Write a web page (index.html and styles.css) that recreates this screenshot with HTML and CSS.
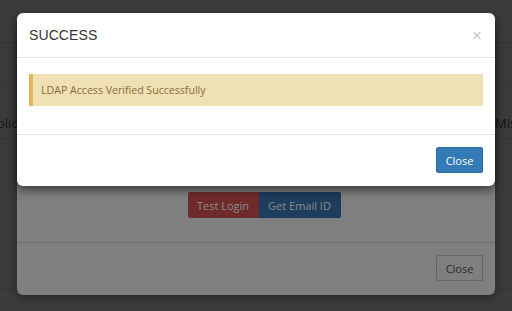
FILE: index.html
```html
<!DOCTYPE html>
<html>
<head>
<meta charset="utf-8">
<link rel="stylesheet" href="styles.css">
</head>
<body>
<div class="page">
  <div class="rule r1"></div>
  <div class="rule r2"></div>
  <div class="rule r3"></div>
  <div class="rule r4"></div>
  <span class="bg-text left">olici</span>
  <span class="bg-text right">Mis</span>
</div>

<div class="modal under">
  <div class="under-body">
    <div class="btn-group">
      <span class="ubtn red">Test Login</span>
      <span class="ubtn blue">Get Email ID</span>
    </div>
  </div>
  <div class="under-footer">
    <span class="ubtn plain">Close</span>
  </div>
</div>

<div class="modal top">
  <div class="modal-header">
    <h4 class="modal-title">SUCCESS</h4>
    <span class="close">&times;</span>
  </div>
  <div class="modal-body">
    <div class="alert">LDAP Access Verified Successfully</div>
  </div>
  <div class="modal-footer">
    <button class="btn-primary">Close</button>
  </div>
</div>
</body>
</html>
```

FILE: styles.css
```css
* { box-sizing: border-box; }
html, body { margin: 0; padding: 0; }
body {
  width: 512px;
  height: 311px;
  background: #3b3b3b;
  font-family: "Open Sans", "Noto Sans", sans-serif;
  overflow: hidden;
  position: relative;
}
.page { position: absolute; inset: 0; }
.rule { position: absolute; left: 0; right: 0; height: 1px; background: #353535; }
.r1 { top: 42px; }
.r2 { top: 81px; }
.r3 { top: 138px; }
.r4 { top: 289px; }
.bg-text {
  position: absolute;
  top: 114px;
  font-size: 13px;
  color: #141414;
}
.bg-text.left { left: -3px; }
.bg-text.right { left: 495px; }

.modal {
  position: absolute;
  left: 17px;
  width: 478px;
  border-radius: 6px;
}
.under {
  top: 30px;
  height: 265px;
  background: #7f7f7f;
  box-shadow: 0 3px 8px rgba(0,0,0,0.35);
  display: flex;
  flex-direction: column;
}
.under-body {
  flex: 1;
  display: flex;
  justify-content: center;
  padding-top: 162px;
  padding-left: 16px;
  border-bottom: 1px solid #6f6f6f;
}
.btn-group { display: flex; height: 26px; }
.ubtn {
  display: flex;
  align-items: center;
  justify-content: center;
  height: 26px;
  font-size: 11px;
  color: #8c8c8c;
}
.red { width: 71px; background: #6e2b2a; border-radius: 2px 0 0 2px; }
.blue { width: 82px; background: #1c3d5c; border-radius: 0 2px 2px 0; }
.under-footer {
  height: 52px;
  display: flex;
  justify-content: flex-end;
  align-items: flex-start;
  padding: 12px 12px 0 0;
}
.plain {
  width: 47px;
  border: 1px solid #666;
  border-radius: 2px;
  color: #2a2a2a;
}

.top {
  top: 13px;
  height: 173px;
  background: #fff;
  box-shadow: 0 4px 10px rgba(0,0,0,0.55);
  display: flex;
  flex-direction: column;
}
.modal-header {
  height: 45px;
  border-bottom: 1px solid #e5e5e5;
  display: flex;
  align-items: center;
  justify-content: space-between;
  padding: 0 12px;
}
.modal-title {
  margin: 0;
  font-family: "Liberation Sans", Arial, sans-serif;
  font-weight: normal;
  font-size: 14px;
  color: #333;
  letter-spacing: 0.1px;
}
.close {
  font-family: "Liberation Sans", Arial, sans-serif;
  font-size: 17px;
  color: #c8c8c8;
  line-height: 1;
  margin-right: 1px;
}
.modal-body {
  height: 77px;
  border-bottom: 1px solid #e5e5e5;
  padding: 16px 12px 0 12px;
}
.alert {
  height: 32px;
  background: #efe1b4;
  border-left: 4px solid #e2b561;
  display: flex;
  align-items: center;
  padding-left: 8px;
  font-size: 10.6px;
  color: #8a6d3b;
}
.modal-footer {
  flex: 1;
  display: flex;
  justify-content: flex-end;
  align-items: flex-start;
  padding: 12px 12px 0 0;
}
.btn-primary {
  width: 47px;
  height: 26px;
  background: #337ab7;
  border: 1px solid #2e6da4;
  border-radius: 2px;
  color: #fff;
  font-family: "Open Sans", "Noto Sans", sans-serif;
  font-size: 11px;
  padding: 0;
}
```
